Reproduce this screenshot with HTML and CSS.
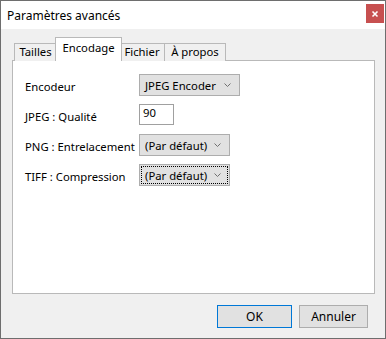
FILE: index.html
```html
<!DOCTYPE html>
<html lang="fr">
<head>
    <meta charset="UTF-8">
    <title>Paramètres avancés</title>
    <link rel="stylesheet" href="styles.css">
</head>
<body>
    <div class="dialog">
        <div class="title-bar">
            <span class="title">Paramètres avancés</span>
            <svg class="close-btn" width="18" height="19" viewBox="0 0 18 19">
                <rect x="0" y="0" width="18" height="19" fill="#c75050"/>
                <path d="M6.5 7.5 L11.5 12.5 M11.5 7.5 L6.5 12.5" stroke="#fff" stroke-width="1.6" fill="none"/>
            </svg>
        </div>
        <div class="dialog-body">
            <div class="tabs">
                <div class="tab tab-sizes">Tailles</div>
                <div class="tab tab-encoding active">Encodage</div>
                <div class="tab tab-file">Fichier</div>
                <div class="tab tab-about">À propos</div>
            </div>
            <div class="tab-panel">
                <div class="settings-grid">
                    <label class="field-label">Encodeur</label>
                    <div class="combo combo-wide">
                        <span>JPEG Encoder</span>
                        <svg class="chevron" width="7" height="4" viewBox="0 0 7 4"><path d="M0.5 0.5 L3.5 3.5 L6.5 0.5" fill="none" stroke="#707070" stroke-width="1"/></svg>
                    </div>

                    <label class="field-label">JPEG : Qualité</label>
                    <div class="text-input">90</div>

                    <label class="field-label">PNG : Entrelacement</label>
                    <div class="combo">
                        <span>(Par défaut)</span>
                        <svg class="chevron" width="7" height="4" viewBox="0 0 7 4"><path d="M0.5 0.5 L3.5 3.5 L6.5 0.5" fill="none" stroke="#707070" stroke-width="1"/></svg>
                    </div>

                    <label class="field-label">TIFF : Compression</label>
                    <div class="combo focused">
                        <span>(Par défaut)</span>
                        <svg class="chevron" width="7" height="4" viewBox="0 0 7 4"><path d="M0.5 0.5 L3.5 3.5 L6.5 0.5" fill="none" stroke="#707070" stroke-width="1"/></svg>
                    </div>
                </div>
            </div>
            <div class="button-row">
                <button class="btn btn-ok">OK</button>
                <button class="btn btn-cancel">Annuler</button>
            </div>
        </div>
    </div>
</body>
</html>
```

FILE: styles.css
```css
body {
    margin: 0;
    background-color: #3a3a3a;
    font-family: "Noto Sans", "Open Sans", sans-serif;
    font-size: 11.3px;
    color: #000;
}
.dialog {
    width: 386px;
    height: 339px;
    box-sizing: border-box;
    border: 1px solid #6e6e6e;
    display: flex;
    flex-direction: column;
    background: #f0f0f0;
}
.title-bar {
    height: 28px;
    background: #fff;
    display: flex;
    justify-content: space-between;
    align-items: flex-start;
    padding-left: 6px;
}
.title {
    margin-top: 6px;
    font-size: 12px;
}
.close-btn {
    flex: none;
    display: block;
    margin-top: 3px;
    margin-right: 1px;
}
.dialog-body {
    flex: 1;
    padding: 9px 11px 0 11px;
    display: flex;
    flex-direction: column;
}
.tabs {
    display: flex;
    align-items: flex-end;
    padding-left: 3px;
    height: 23px;
    position: relative;
    z-index: 1;
}
.tab {
    height: 18px;
    box-sizing: border-box;
    border: 1px solid #b9b9b9;
    border-bottom: none;
    background: #f0f0f0;
    text-align: center;
    line-height: 16px;
    margin-left: -1px;
}
.tab.active {
    height: 24px;
    background: #fff;
    margin: 0 -2px 0 -2px;
    line-height: 20px;
    position: relative;
    z-index: 2;
}
.tab-sizes { width: 43px; }
.tab-encoding { width: 67px; }
.tab-file { width: 46px; }
.tab-about { width: 62px; }
.tab-panel {
    height: 234px;
    box-sizing: border-box;
    margin-top: -1px;
    border: 1px solid #b9b9b9;
    background: #fff;
    width: 363px;
    padding: 13px 0 0 12px;
}
.settings-grid {
    display: grid;
    grid-template-columns: 114px auto;
    grid-auto-rows: 22px;
    row-gap: 8px;
    align-items: start;
    justify-items: start;
}
.field-label {
    padding-top: 5px;
    white-space: nowrap;
}
.combo {
    height: 22px;
    width: 91px;
    box-sizing: border-box;
    border: 1px solid #adadad;
    background: #e1e1e1;
    display: flex;
    align-items: center;
    justify-content: space-between;
    padding: 0 8px 0 5px;
    position: relative;
}
.combo-wide {
    width: 101px;
}
.combo.focused::after {
    content: "";
    position: absolute;
    inset: 1px;
    border: 1px dotted #000;
}
.chevron {
    display: block;
}
.text-input {
    width: 35px;
    height: 21px;
    box-sizing: border-box;
    border: 1px solid #a0a0a0;
    background: #fff;
    padding: 0 3px;
    line-height: 16px;
}
.button-row {
    display: flex;
    justify-content: flex-end;
    gap: 7px;
    padding: 11px 6px 0 0;
}
.btn {
    height: 23px;
    border: 1px solid #adadad;
    background: #e1e1e1;
    font-family: inherit;
    font-size: 12px;
    padding: 0;
    color: #000;
}
.btn-ok {
    width: 75px;
    border-color: #0078d7;
}
.btn-cancel {
    width: 69px;
}
```
